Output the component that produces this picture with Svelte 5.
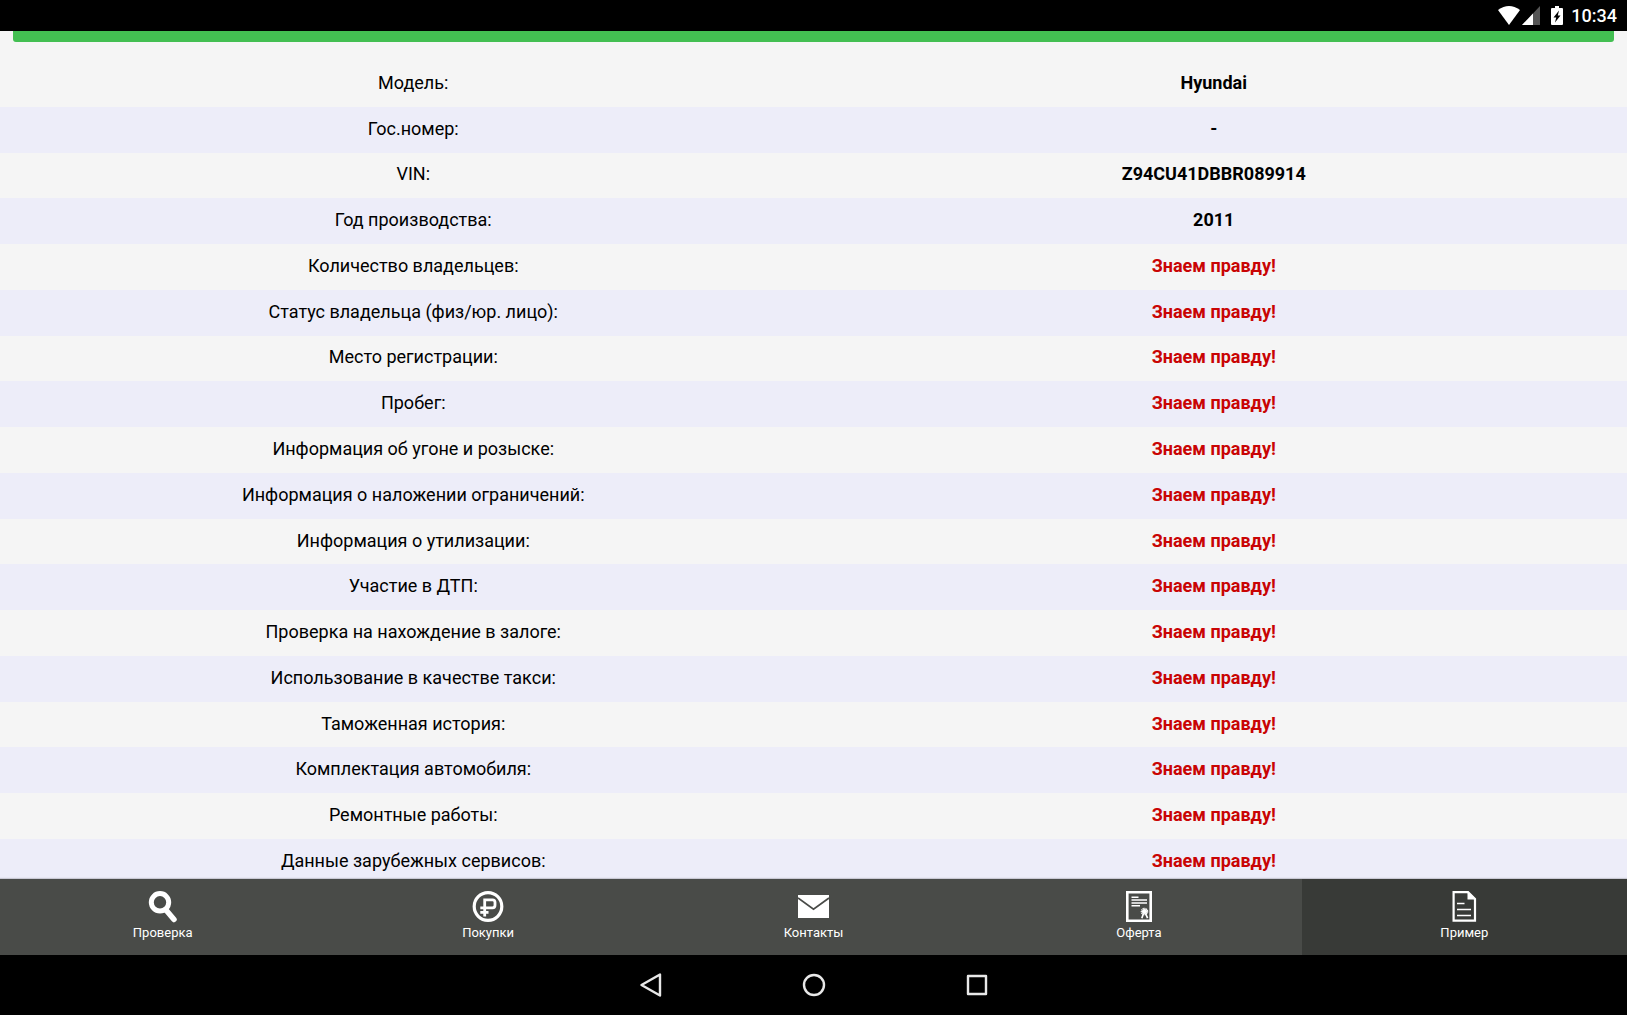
<script>
  const hidden = 'Знаем правду!';

  const rows = [
    { label: 'Модель:', value: 'Hyundai' },
    { label: 'Гос.номер:', value: '-' },
    { label: 'VIN:', value: 'Z94CU41DBBR089914' },
    { label: 'Год производства:', value: '2011' },
    { label: 'Количество владельцев:', value: hidden },
    { label: 'Статус владельца (физ/юр. лицо):', value: hidden },
    { label: 'Место регистрации:', value: hidden },
    { label: 'Пробег:', value: hidden },
    { label: 'Информация об угоне и розыске:', value: hidden },
    { label: 'Информация о наложении ограничений:', value: hidden },
    { label: 'Информация о утилизации:', value: hidden },
    { label: 'Участие в ДТП:', value: hidden },
    { label: 'Проверка на нахождение в залоге:', value: hidden },
    { label: 'Использование в качестве такси:', value: hidden },
    { label: 'Таможенная история:', value: hidden },
    { label: 'Комплектация автомобиля:', value: hidden },
    { label: 'Ремонтные работы:', value: hidden },
    { label: 'Данные зарубежных сервисов:', value: hidden }
  ];

  const tabs = [
    { id: 'check', label: 'Проверка' },
    { id: 'orders', label: 'Покупки' },
    { id: 'contacts', label: 'Контакты' },
    { id: 'offer', label: 'Оферта' },
    { id: 'sample', label: 'Пример' }
  ];

  let active = 'sample';
</script>

<div class="screen">
  <header class="status">
    <svg width="22" height="19" viewBox="0 0 22 19">
      <path d="M0 4Q11-4 22 4L11 19z" fill="#fff" />
    </svg>
    <svg class="signal" width="18" height="19" viewBox="0 0 18 19">
      <path d="M18 0V19H0z" fill="#555" />
      <path d="M11 7.4V19H0z" fill="#fff" />
    </svg>
    <svg class="battery" width="12" height="19" viewBox="0 0 12 19">
      <path d="M4 0h4v2h3q1 0 1 1v15q0 1-1 1H1q-1 0-1-1V3q0-1 1-1h3z" fill="#fff" />
      <path d="M8 4.5L2.5 11.5H5.2L4 16.5L9.5 9.5H6.8z" fill="#000" />
    </svg>
    <time>10:34</time>
  </header>

  <main class="content">
    <div class="banner"></div>
    <table class="report">
      <tbody>
        {#each rows as row}
          <tr>
            <th scope="row">{row.label}</th>
            <td class:locked={row.value === hidden}>{row.value}</td>
          </tr>
        {/each}
      </tbody>
    </table>
  </main>

  <nav class="tabs">
    {#each tabs as tab}
      <button class="tab" class:active={active === tab.id} on:click={() => (active = tab.id)}>
        <svg width="32" height="32" viewBox="0 0 32 32" fill="none" stroke="#fff">
          {#if tab.id === 'check'}
            <circle cx="13" cy="11.3" r="8.7" stroke-width="5" />
            <path d="M19 19L27 28.5" stroke-width="5.5" stroke-linecap="round" />
          {:else if tab.id === 'orders'}
            <circle cx="16" cy="15.5" r="13.8" stroke-width="3.2" />
            <path d="M12.7 25.5V8.8H20.5Q23 8.8 23 11.3V14.3Q23 16.8 20.5 16.8H8.3M8.3 21.3H16.5" stroke-width="2.8" />
          {:else if tab.id === 'contacts'}
            <path d="M0 4h31v23H0z" fill="#fff" stroke="none" />
            <path d="M0 7L15.5 18.2L31 7" stroke="#494b48" stroke-width="1.8" />
          {:else if tab.id === 'offer'}
            <path d="M4.3 1.2h23.4v28.6H4.3z" stroke-width="2.6" />
            <path d="M8.5 6.2h7M8.5 9h15.5M8.5 12h15.5M8.5 14.8h8.5" stroke-width="1.4" />
            <path d="M20.5 22.5L18.8 27.2M22.5 22.5L24.6 27.2" stroke-width="1.7" />
            <circle cx="21.5" cy="20.5" r="3" stroke-width="1.6" stroke-dasharray="1.2 .5" />
            <circle cx="21.5" cy="20.5" r="2.5" fill="#fff" stroke="none" />
          {:else}
            <path d="M5.6 1.2H20L27 8V29.6H5.6z" stroke-width="2.2" />
            <path d="M19.5 0L28.1 8.5H19.5z" fill="#fff" stroke="none" />
            <path d="M9 12.5h7.5M9 18.5h14M9 24.5h14" stroke-width="1.4" />
          {/if}
        </svg>
        <span>{tab.label}</span>
      </button>
    {/each}
  </nav>

  <nav class="system">
    <button aria-label="Назад">
      <svg width="24" height="24" viewBox="0 0 24 24">
        <path d="M21 1.5V22.5L2.5 12z" />
      </svg>
    </button>
    <button aria-label="Домой">
      <svg width="24" height="24" viewBox="0 0 24 24">
        <circle cx="12" cy="12" r="10" />
      </svg>
    </button>
    <button aria-label="Недавние">
      <svg width="24" height="24" viewBox="0 0 24 24">
        <rect x="3" y="3" width="18" height="18" />
      </svg>
    </button>
  </nav>
</div>

<style>
  :global(body) {
    margin: 0;
    background: #000;
  }

  .screen {
    display: flex;
    flex-direction: column;
    height: 100vh;
    font-family: Roboto, 'Noto Sans', sans-serif;
    color: #000;
    background: #f5f5f5;
  }

  .status {
    display: flex;
    align-items: center;
    justify-content: flex-end;
    flex: none;
    height: 31px;
    padding-right: 10px;
    background: #000;
    color: #fff;
  }

  .status time {
    margin-left: 8px;
    font-size: 18px;
    font-weight: 500;
    line-height: 31px;
  }

  .signal {
    margin-left: 2px;
  }

  .battery {
    margin-left: 11px;
  }

  .content {
    display: flex;
    flex-direction: column;
    flex: 1;
    min-height: 0;
    overflow: hidden;
  }

  .banner {
    flex: none;
    height: 11px;
    margin: 0 13px 19px;
    border-radius: 0 0 3px 3px;
    background: #43bf52;
  }

  /* the last row runs on under the tab bar */
  .report {
    flex: none;
    width: 100%;
    height: calc(100% - 24px);
    border-collapse: collapse;
    table-layout: fixed;
    font-size: 18px;
    line-height: 20px;
    text-align: center;
  }

  .report tr:nth-child(even) {
    background: #ededf9;
  }

  .report th,
  .report td {
    width: 50%;
    padding: 11px 0 13px;
    box-sizing: border-box;
  }

  .report th {
    padding-left: 13px;
    font-weight: 400;
  }

  .report td {
    padding-right: 13px;
    font-weight: 700;
  }

  .report .locked {
    color: #c90404;
  }

  .tabs {
    display: flex;
    flex: none;
    height: 76px;
    background: #494b48;
    box-shadow: 0 -1px 1px rgba(0, 0, 0, 0.15);
  }

  button {
    border: 0;
    padding: 0;
    background: none;
    font-family: inherit;
    cursor: pointer;
  }

  .tab {
    display: flex;
    flex: 1;
    flex-direction: column;
    align-items: center;
    padding-top: 12px;
    color: #fff;
    font-size: 13px;
    line-height: 20px;
  }

  .tab.active {
    background: #383a37;
  }

  .system {
    display: flex;
    flex: none;
    align-items: center;
    justify-content: center;
    gap: 139px;
    height: 60px;
    background: #000;
  }

  .system svg {
    display: block;
    fill: none;
    stroke: #e8e8e8;
    stroke-width: 2.4;
    stroke-linejoin: round;
  }
</style>
